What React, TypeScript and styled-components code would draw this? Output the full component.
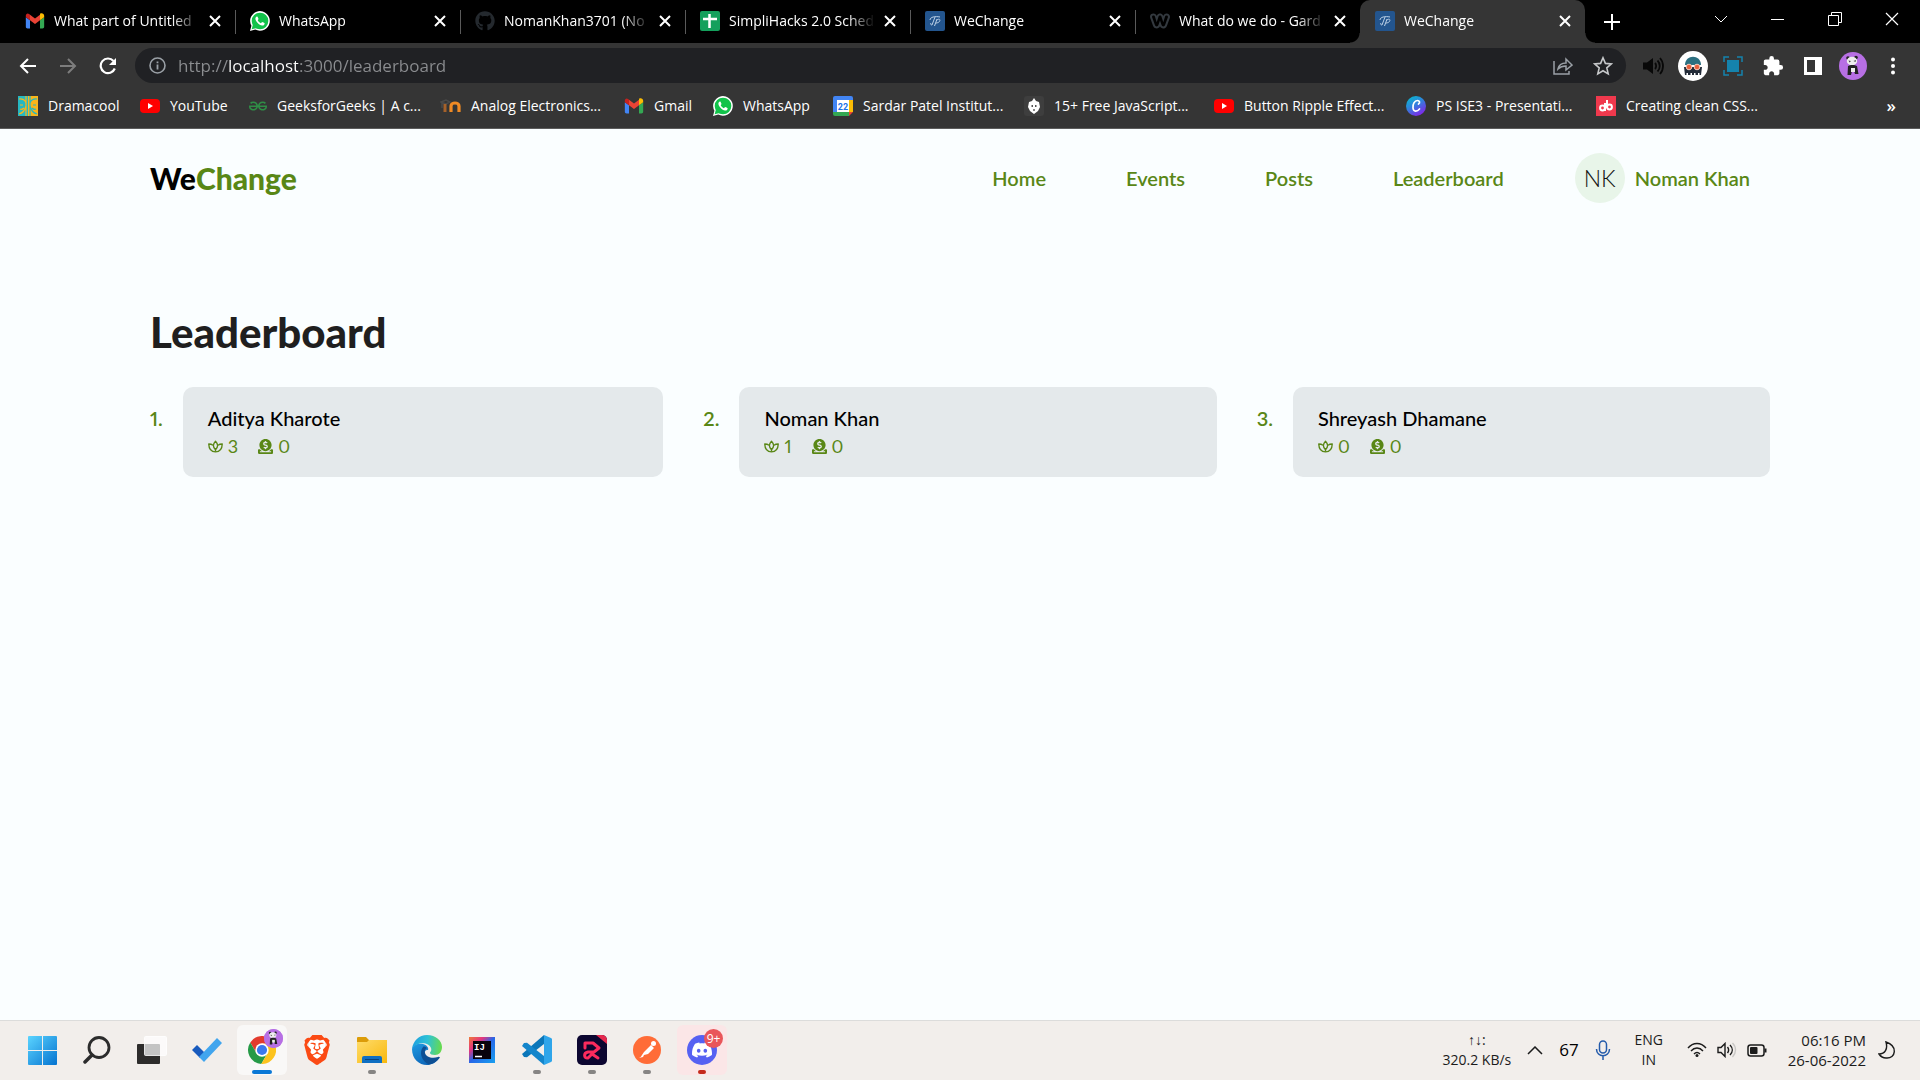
import React from "react";
import styled, { createGlobalStyle, css } from "styled-components";
import { FaDonate, FaGithub, FaWhatsapp, FaWeebly } from "react-icons/fa";
import { MdExtension } from "react-icons/md";
import { SiBrave, SiGeeksforgeeks, SiDiscord } from "react-icons/si";

const uiFont = `"Open Sans", "Noto Sans", sans-serif`;
const pageFont = `Lato, "Open Sans", sans-serif`;
const green = "#598716";

const GlobalStyle = createGlobalStyle`
  *, *::before, *::after { box-sizing: border-box; }
  body { margin: 0; background: #fafeff; font-family: ${uiFont}; }
  button, input { font: inherit; color: inherit; border: 0; padding: 0; margin: 0; background: none; }
  button { cursor: pointer; }
  a { color: inherit; text-decoration: none; }
  svg { display: block; flex: none; }
`;

const Screen = styled.div`
  display: flex;
  flex-direction: column;
  min-height: 100vh;
`;

/* ---------- Browser: tab strip ---------- */

const TabStrip = styled.div`
  display: flex;
  align-items: stretch;
  height: 43px;
  padding-left: 10px;
  background: #000;
  color: #fff;
`;

const Tab = styled.div<{ $active?: boolean; $divider?: boolean }>`
  position: relative;
  display: flex;
  align-items: center;
  gap: 5px;
  flex: 0 1 225px;
  min-width: 0;
  padding: 0 10px 2px 15px;
  background: ${(p) => (p.$active ? "#353535" : "transparent")};
  border-radius: 10px 10px 0 0;
  ${(p) =>
    p.$divider &&
    css`
      &::after {
        content: "";
        position: absolute;
        right: -1px;
        top: 10px;
        width: 1px;
        height: 24px;
        background: #5a5a5a;
      }
    `}
  ${(p) =>
    p.$active &&
    css`
      &::before,
      &::after {
        content: "";
        position: absolute;
        bottom: 0;
        width: 10px;
        height: 10px;
      }
      &::before {
        left: -10px;
        background: radial-gradient(circle at 0 0, transparent 9px, #353535 10px);
      }
      &::after {
        right: -10px;
        background: radial-gradient(circle at 100% 0, transparent 9px, #353535 10px);
      }
    `}
`;

const TabTitle = styled.button`
  display: flex;
  align-items: center;
  gap: 9px;
  flex: 1;
  min-width: 0;
  font-size: 14px;
  line-height: 24px;
  text-align: left;
`;

const TabText = styled.span`
  flex: 1;
  min-width: 0;
  overflow: hidden;
  white-space: nowrap;
  mask-image: linear-gradient(to right, #000 calc(100% - 28px), transparent);
`;

const CloseButton = styled.button`
  display: grid;
  place-items: center;
  width: 20px;
  height: 20px;
`;

const NewTab = styled.button`
  display: grid;
  place-items: center;
  width: 54px;
`;

const WindowControls = styled.div`
  display: flex;
  margin-left: auto;
`;

const WindowButton = styled.button`
  display: grid;
  place-items: center;
  width: 57px;
  height: 38px;
`;

/* ---------- Browser: toolbar ---------- */

const Toolbar = styled.div`
  display: flex;
  align-items: center;
  gap: 11px;
  height: 45px;
  padding: 0 11px 0 12px;
  background: #353535;
  color: #fff;
`;

const ToolGroup = styled.div`
  display: flex;
  gap: 8px;
`;

const ToolButton = styled.button`
  display: grid;
  place-items: center;
  width: 32px;
  height: 32px;
`;

const AddressBar = styled.label`
  display: flex;
  align-items: center;
  gap: 12px;
  flex: 1;
  min-width: 0;
  height: 35px;
  padding: 0 7px 0 14px;
  border-radius: 18px;
  background: #202124;
  color: #9aa0a6;
`;

const AddressInput = styled.input`
  flex: 1;
  min-width: 0;
  height: 30px;
  outline: 0;
  font-size: 17px;
  color: #8b8d90;
  background: linear-gradient(to right, #8b8d90 50px, #fff 50px, #fff 120px, #8b8d90 120px);
  background-clip: text;
  -webkit-background-clip: text;
  -webkit-text-fill-color: transparent;
`;

/* ---------- Browser: bookmarks ---------- */

const Bookmarks = styled.nav`
  display: flex;
  align-items: center;
  height: 41px;
  padding: 0 24px 4px 18px;
  background: #353535;
  border-bottom: 1px solid #5c5c5c;
  color: #fff;
`;

const Bookmark = styled.a<{ $w: number }>`
  display: flex;
  align-items: center;
  gap: 10px;
  flex: 0 1 ${(p) => p.$w}px;
  min-width: 0;
  font-size: 14px;
  line-height: 24px;
  white-space: nowrap;
`;

const MoreBookmarks = styled.button`
  margin-left: auto;
  font-size: 17px;
  line-height: 20px;
  font-weight: 600;
`;

/* ---------- Page ---------- */

const Site = styled.div`
  flex: 1;
  padding: 0 150px;
  background: #fafeff;
  font-family: ${pageFont};
`;

const Header = styled.header`
  display: flex;
  align-items: center;
  justify-content: space-between;
  height: 98px;
  padding-right: 20px;
`;

const Logo = styled.a`
  font-size: 30px;
  font-weight: 900;
  line-height: 40px;
  color: #000;
  span { color: ${green}; }
`;

const MainNav = styled.nav`
  display: flex;
  align-items: center;
  gap: 80px;
  color: ${green};
  font-size: 20px;
  line-height: 28px;
  font-weight: 600;
`;

const NavEnd = styled.div`
  display: flex;
  align-items: center;
  gap: 71px;
`;

const Profile = styled.a`
  display: flex;
  align-items: center;
  gap: 10px;
`;

const Avatar = styled.span`
  display: grid;
  place-items: center;
  width: 50px;
  height: 50px;
  border-radius: 50%;
  background: #e8f5e9;
  color: #111;
  font-size: 23px;
  font-weight: 300;
`;

const Main = styled.main`
  padding-top: 80px;
`;

const Heading = styled.h1`
  margin: 0 0 30px;
  font-size: 42px;
  line-height: 50px;
  font-weight: 900;
  color: #1f1f1f;
`;

const Board = styled.ol`
  display: grid;
  grid-template-columns: repeat(3, 1fr);
  gap: 40px;
  margin: 0;
  padding: 0;
  list-style: none;
  font-variant-numeric: proportional-nums;
`;

const Entry = styled.li`
  display: flex;
  gap: 20px;
`;

const Rank = styled.span`
  padding-top: 17px;
  font-size: 20px;
  line-height: 28px;
  font-weight: 600;
  color: ${green};
`;

const Card = styled.article`
  flex: 1;
  padding: 17px 25px;
  border-radius: 10px;
  background: #e4e9eb;
`;

const Name = styled.h2`
  margin: 0;
  font-size: 20px;
  line-height: 28px;
  font-weight: 500;
  color: #000;
`;

const Stats = styled.div`
  display: flex;
  gap: 20px;
`;

const Stat = styled.span`
  display: flex;
  align-items: center;
  gap: 5px;
  font-size: 18px;
  line-height: 28px;
  color: ${green};
`;

/* ---------- Taskbar ---------- */

const Taskbar = styled.footer`
  display: flex;
  align-items: center;
  height: 60px;
  padding: 0 24px 1px 17px;
  background: #f2eeeb;
  border-top: 1px solid #dcdcdb;
  color: #1b1b1b;
`;

const Apps = styled.div`
  display: flex;
  gap: 5px;
`;

const AppButton = styled.button<{ $bg?: string; $mark?: string; $wide?: boolean }>`
  position: relative;
  display: grid;
  place-items: center;
  width: 50px;
  height: 50px;
  border-radius: 6px;
  background: ${(p) => p.$bg || "transparent"};
  ${(p) =>
    p.$mark &&
    css`
      &::after {
        content: "";
        position: absolute;
        left: calc(50% - ${p.$wide ? 10 : 4}px);
        bottom: 1px;
        width: ${p.$wide ? 20 : 8}px;
        height: 4px;
        border-radius: 2px;
        background: ${p.$mark};
      }
    `}
`;

const Badge = styled.span<{ $bg: string }>`
  position: absolute;
  top: 4px;
  right: 4px;
  display: grid;
  place-items: center;
  width: 19px;
  height: 19px;
  border-radius: 50%;
  background: ${(p) => p.$bg};
  color: #fff;
  font-size: 12px;
  line-height: 18px;
`;

const Tray = styled.div`
  display: flex;
  align-items: center;
  gap: 21px;
  margin-left: auto;
`;

const TrayGroup = styled.div<{ $gap: number }>`
  display: flex;
  align-items: center;
  gap: ${(p) => p.$gap}px;
`;

const TrayText = styled.div<{ $align?: string; $w?: number; $size?: number }>`
  min-width: ${(p) => p.$w || 0}px;
  font-size: ${(p) => p.$size || 14}px;
  line-height: 20px;
  text-align: ${(p) => p.$align || "center"};
  white-space: nowrap;
`;

const Temperature = styled.span`
  font-size: 17px;
  line-height: 20px;
  font-weight: 500;
  color: #000;
`;

/* ---------- Icons ---------- */

const line = { fill: "none", stroke: "currentColor" } as const;

const CloseIcon = () => (
  <svg width="12" height="12" viewBox="0 0 12 12" {...line} strokeWidth="2"><path d="M1 1l10 10M11 1L1 11" /></svg>
);

const GmailIcon = ({ w = 20 }: { w?: number }) => (
  <svg width={w} height="20" viewBox="0 0 24 24">
    <path fill="#4285f4" d="M3 21h3V11L1 7.5V19c0 1.100.9 2 2 2z" />
    <path fill="#34a853" d="M18 21h3c1.100 0 2-.9 2-2V7.500L18 11z" />
    <path fill="#fbbc04" d="M18 5v6l5-3.500V5.800c0-2.500-2.900-3.900-4.900-2.400z" />
    <path fill="#ea4335" d="M6 11V4.500l6 4.500 6-4.500V11l-6 4.500z" />
    <path fill="#c5221f" d="M1 5.800v1.700L6 11V4.500L4.900 3.600C2.900 2 1 3.300 1 5.800z" />
  </svg>
);

const WhatsAppIcon = () => (
  <svg width="20" height="20" viewBox="0 0 24 24">
    <path fill="#fff" d="M0 24l1.700-6.200A11.800 11.800 0 1 1 6.300 22.300z" />
    <circle cx="12" cy="12" r="10" fill="#12c34a" />
    <path fill="#12c34a" d="M2 22l1.600-6 4.400 4.500z" />
    <path fill="#fff" d="M8.200 6.500c-.5 0-2 1-1.700 3.100.4 3 4.300 7.300 8 7.800 1.700.2 3-.9 3.100-2.500 0-.6-2.600-1.800-3-1.700-.5.1-1 1.500-1.500 1.400-1.400-.4-3.200-2-3.800-3.500-.1-.4.9-1 .9-1.500 0-.5-1-3-1.400-3.100z" />
  </svg>
);

const SheetIcon = () => (
  <svg width="20" height="20" viewBox="0 0 20 20"><rect width="20" height="20" rx="2" fill="#14a05c" /><path d="M9.500 3v14M3 8h14" stroke="#fff" strokeWidth="2.500" /></svg>
);

const WeChangeIcon = () => (
  <svg width="20" height="20" viewBox="0 0 20 20" fill="none" stroke="#bcd0e6" strokeWidth="1">
    <rect width="20" height="20" rx="2" fill="#23558e" stroke="none" />
    <path d="M5 9c0-3 5-4 10-3M10 6L7 14c-1 0-2-1-1-2M12 8l-2.500 7M12 9c4-3 4 3-1 3" />
  </svg>
);

const YouTubeIcon = () => (
  <svg width="20" height="20" viewBox="0 0 20 20"><rect y="3" width="20" height="14" rx="4" fill="#f00" /><path fill="#fff" d="M8 7l5 3-5 3z" /></svg>
);

const DramaIcon = () => (
  <svg width="20" height="20" viewBox="0 0 20 20" fill="none" strokeWidth="1.200">
    <rect width="10" height="20" fill="#26b8c2" /><rect x="10" width="10" height="20" fill="#f9b51a" />
    <path stroke="#f9b51a" d="M1 3c5-1 8 3 7 7s-3 7-7 8M2 9h3M2 13c2 1 3 0 4-1M8 0v20" />
    <path stroke="#26b8c2" d="M19 3c-5-1-8 3-7 7s3 7 7 8M15 9h3M14 12c1 1 2 2 4 1M12 0v20" />
  </svg>
);

const MoodleIcon = () => (
  <svg width="21" height="20" viewBox="0 0 21 20" fill="none">
    <path d="M1 6l5-2 4 2-4 2zM2 7v5" stroke="#4a4a4a" strokeWidth="1.500" />
    <path d="M5 8v8" stroke="#a5612a" strokeWidth="3" />
    <path d="M11 16v-6c0-4 8-4 8 0v6" stroke="#f08a24" strokeWidth="3.200" />
  </svg>
);

const CalendarIcon = () => (
  <svg width="20" height="20" viewBox="0 0 20 20">
    <path fill="#4285f4" d="M0 2a2 2 0 0 1 2-2h16a2 2 0 0 1 2 2v3H4v11H0z" />
    <path fill="#fbbc04" d="M16 4h4v12h-4z" /><path fill="#34a853" d="M0 16h16v4H2a2 2 0 0 1-2-2z" /><path fill="#ea4335" d="M16 16h4l-4 4z" />
    <path fill="#fff" d="M4 4h12v12H4z" />
    <text x="10" y="13.500" textAnchor="middle" fontSize="9" fontWeight="700" fontFamily="Roboto, sans-serif" fill="#1a73e8">22</text>
  </svg>
);

const DogIcon = () => (
  <svg width="20" height="20" viewBox="0 0 20 20">
    <rect width="20" height="20" rx="3" fill="#3e3e3e" />
    <path fill="#fff" d="M5 6l3-1 2-3 2 3 3 1 1 5-2 4-4 3-4-3-2-4z" />
    <path fill="#555" d="M7.500 9h1.500v2H7.500zM11 9h1.500v2H11zM9.300 13h1.400v2H9.300z" />
  </svg>
);

const CanvaIcon = () => (
  <svg width="20" height="20" viewBox="0 0 20 20" fill="none">
    <defs><linearGradient id="canva" x1="0" y1="0" x2=".6" y2="1"><stop stopColor="#00c4cc" /><stop offset=".5" stopColor="#2f83dc" /><stop offset="1" stopColor="#7d2ae8" /></linearGradient></defs>
    <circle cx="10" cy="10" r="10" fill="url(#canva)" />
    <path d="M12.500 8c2-1 1-3.500-1-3.500-3 0-5 4-4.500 7.500.4 4 4 4 6.500 1" stroke="#fff" strokeWidth="1.700" strokeLinecap="round" />
  </svg>
);

const DbIcon = () => (
  <svg width="20" height="20" viewBox="0 0 20 20" fill="none" stroke="#fff" strokeWidth="2">
    <rect width="20" height="20" fill="#f0394d" stroke="none" />
    <circle cx="6.500" cy="12" r="2.400" /><circle cx="13.500" cy="11" r="2.400" /><path d="M9 7v8M11 4v8" />
  </svg>
);

const LotusIcon = () => (
  <svg width="15" height="15" viewBox="0 0 24 24" {...line} strokeWidth="2.200" strokeLinejoin="round">
    <path d="M12 17c-4.500-4-4.500-9 0-13.500 4.500 4.500 4.500 9.500 0 13.500z" />
    <path d="M8 10C6 8.500 4 8 1.200 8c.3 8 4 12.500 10.800 12.500S22.500 16 22.800 8c-2.800 0-4.800.5-6.800 2" />
    <path d="M12 20.500V17" />
  </svg>
);

const PandaIcon = ({ size }: { size: number }) => (
  <svg width={size} height={size} viewBox="0 0 28 28">
    <circle cx="14" cy="14" r="14" fill="#b76fe4" />
    <circle cx="9" cy="6" r="1.800" fill="#222" /><circle cx="17" cy="5.500" r="1.800" fill="#222" />
    <ellipse cx="13" cy="9" rx="5.200" ry="4.300" fill="#eee" />
    <path fill="#444" d="M9.500 8.500l2.500.5-1.500 1.500zM14.500 9l2.500-1-.5 2z" />
    <path fill="#222" d="M9 14c2-1.500 7-1.500 9 0l1.500 8h-3.500l-1-3h-2l-1 4H8.500z" />
    <path fill="#eee" d="M12 16h4v4h-4z" />
  </svg>
);

const MaskIcon = () => (
  <svg width="30" height="30" viewBox="0 0 30 30">
    <circle cx="15" cy="15" r="15" fill="#fff" />
    <path fill="#2b6f80" d="M7 14c0-11 16-11 16 0z" />
    <path fill="#222b38" d="M6 16h18l-1 8h-1.500v-2H20v2h-2.500v-2H16v2h-2v-2h-1.500v2H10v-2H8.500v2H7z" />
    <circle cx="11" cy="16" r="2.800" fill="#e8603c" stroke="#f3c9bb" /><circle cx="19" cy="16" r="2.800" fill="#e8603c" stroke="#f3c9bb" />
  </svg>
);

const ChromeIcon = () => (
  <svg width="28" height="28" viewBox="2 2 44 44">
    <path fill="#e33b2e" d="M5.540 12.030A22 22 0 0 1 43.600 14H24l-8.660 15z" />
    <path fill="#269a47" d="M5.540 12.030A22 22 0 0 0 22.860 45.970L32.660 29 24 24l-8.660 5z" />
    <path fill="#fcc31e" d="M22.860 45.970A22 22 0 0 0 43.600 14H24l8.660 15z" />
    <circle cx="24" cy="24" r="10.500" fill="#fff" /><circle cx="24" cy="24" r="8" fill="#3b79ee" />
  </svg>
);

const WindowsIcon = () => (
  <svg width="29" height="29" viewBox="0 0 29 29">
    <defs><linearGradient id="win" x1="0" y1="0" x2="1" y2="1" ><stop stopColor="#5bd4ff" /><stop offset="1" stopColor="#0573d0" /></linearGradient></defs>
    <rect width="29" height="29" rx="1" fill="url(#win)" /><path d="M14.500 0v29M0 14.500h29" stroke="#f2eeeb" />
  </svg>
);

const SearchIcon = () => (
  <svg width="28" height="28" viewBox="0 0 28 28" fill="none" stroke="#2c2c2c" strokeWidth="2.800" strokeLinecap="round"><circle cx="16" cy="11.500" r="10" /><path d="M9 19l-7 7" strokeWidth="3.500" /></svg>
);

const TaskViewIcon = () => (
  <svg width="30" height="30" viewBox="0 0 30 30">
    <rect y="9" width="23" height="20" rx="1" fill="#2d2c2b" />
    <rect x="7.500" y="1.500" width="22" height="19" rx="1" fill="#fff" fillOpacity=".72" stroke="#fff" strokeOpacity=".8" />
  </svg>
);

const TodoIcon = () => (
  <svg width="30" height="26" viewBox="0 0 30 26"><path fill="#185abd" d="M0 13l5-5 8 8-5 5z" /><path fill="#41a5ee" d="M7 20L25 1l5 5-18 19z" /></svg>
);

const FolderIcon = () => (
  <svg width="30" height="28" viewBox="0 0 30 28">
    <defs><linearGradient id="folder" x1="0" y1="0" x2="1" y2="1"><stop stopColor="#ffdc6b" /><stop offset="1" stopColor="#f8b80d" /></linearGradient></defs>
    <path fill="#dc9c09" d="M0 2a1 1 0 0 1 1-1h8l3 3h17a1 1 0 0 1 1 1v4H0z" /><path fill="url(#folder)" d="M0 6h10l2-2h18v23H0z" />
    <path fill="#0f6fc2" d="M5 27v-5a2 2 0 0 1 2-2h16a2 2 0 0 1 2 2v5z" /><path stroke="#07437e" d="M8 23.500h14" />
  </svg>
);

const EdgeIcon = () => (
  <svg width="30" height="30" viewBox="0 0 30 30">
    <defs>
      <linearGradient id="edgeTop" x1="0" y1=".4" x2="1" y2=".5"><stop stopColor="#1e9fe0" /><stop offset=".5" stopColor="#2fc2d5" /><stop offset="1" stopColor="#68db4b" /></linearGradient>
      <linearGradient id="edgeLeft" x1="0" y1="0" x2=".6" y2="1"><stop stopColor="#209be2" /><stop offset="1" stopColor="#0d63b6" /></linearGradient>
    </defs>
    <path fill="url(#edgeLeft)" d="M0 14C1 9 7 8 11 9c4 1 6 4 5 6-3 0-4 2-3 5 2 4 8 6 14 3-3 5-8 7-12 7C7 30 0 24 0 14z" />
    <path fill="#0e4f94" d="M11 12c-4 5-2 14 6 17.500 4-.5 8-3 11-7-1-1-1-1-2-.5-6 2-12 0-13-4-.6-2 0-4 2-5-1-1-3-2-4-1z" />
    <path fill="url(#edgeTop)" d="M0 14C1 6 7 0 15 0c9 0 15 6 15 12 0 5-3 8-7 8-3 0-5-1-5-2s2-2 1-5C17 7 5 6 0 14z" />
  </svg>
);

const IdeaIcon = () => (
  <svg width="26" height="26" viewBox="0 0 26 26">
    <defs><linearGradient id="idea" x1="0" y1="0" x2="1" y2="1"><stop stopColor="#ee7a38" /><stop offset=".28" stopColor="#e3347f" /><stop offset=".5" stopColor="#2767e8" /><stop offset="1" stopColor="#18a0ef" /></linearGradient></defs>
    <rect width="26" height="26" fill="url(#idea)" /><rect x="4" y="4" width="18" height="18" fill="#08030c" />
    <text x="5" y="13" fontSize="9" fontWeight="700" fontFamily="'Liberation Mono', monospace" fill="#fff">IJ</text><path stroke="#fff" strokeWidth="1.500" d="M6 19.500h7" />
  </svg>
);

const CodeIcon = () => (
  <svg width="30" height="30" viewBox="0 0 30 30">
    <path fill="#0b76b9" d="M22 0L0 19l2 3 3 .2L22 9z" /><path fill="#1485cb" d="M22 30L0 11l2-3 3-.2L22 21z" />
    <path fill="#2fa5ea" d="M22 0l7 3a2 2 0 0 1 1 2v20a2 2 0 0 1-1 2l-7 3z" />
  </svg>
);

const PlayerIcon = () => (
  <svg width="30" height="30" viewBox="0 0 30 30" fill="none">
    <rect width="30" height="30" rx="5" fill="#0c0630" /><path fill="#e5294e" d="M19 0h6a5 5 0 0 1 5 5v4z" />
    <path d="M8 13V8h8l6 5-5 4-6 0c-5 1-4 7 0 6l4-4 6 4" stroke="#fb2a5d" strokeWidth="3" strokeLinejoin="round" strokeLinecap="round" />
  </svg>
);

const PostmanIcon = () => (
  <svg width="28" height="28" viewBox="0 0 28 28"><circle cx="14" cy="14" r="14" fill="#ff6c37" /><circle cx="20.500" cy="7.500" r="2.500" fill="#fff" /><path fill="#fff" d="M18 9l3 3-6 6-4 1-4 3 4-6zM6 22l5-3-1 2z" /></svg>
);

const DiscordIcon = () => (
  <svg width="30" height="30" viewBox="0 0 30 30"><circle cx="15" cy="15" r="15" fill="#5661f2" /><g transform="translate(5 5)" color="#fff"><SiDiscord size={20} /></g></svg>
);

const BraveIcon = () => (
  <svg width="30" height="30" viewBox="0 0 30 30"><path fill="#fff" d="M7 5h16v15l-8 7-8-7z" /><g color="#fb4a14"><SiBrave size={30} /></g></svg>
);

/* ---------- Data ---------- */

const tabs: { title: string; icon: React.ReactNode; active?: boolean }[] = [
  { title: "What part of Untitled", icon: <GmailIcon /> },
  { title: "WhatsApp", icon: <WhatsAppIcon /> },
  { title: "NomanKhan3701 (No", icon: <FaGithub size={20} color="#24292e" /> },
  { title: "SimpliHacks 2.0 Sched", icon: <SheetIcon /> },
  { title: "WeChange", icon: <WeChangeIcon /> },
  { title: "What do we do - Gard", icon: <FaWeebly size={20} color="#33393f" /> },
  { title: "WeChange", icon: <WeChangeIcon />, active: true },
];

const bookmarks = [
  { title: "Dramacool", w: 122, icon: <DramaIcon /> },
  { title: "YouTube", w: 109, icon: <YouTubeIcon /> },
  { title: "GeeksforGeeks | A c...", w: 191, icon: <SiGeeksforgeeks size={18} color="#2f8d46" /> },
  { title: "Analog Electronics...", w: 184, icon: <MoodleIcon /> },
  { title: "Gmail", w: 89, icon: <GmailIcon /> },
  { title: "WhatsApp", w: 120, icon: <WhatsAppIcon /> },
  { title: "Sardar Patel Institut...", w: 191, icon: <CalendarIcon /> },
  { title: "15+ Free JavaScript...", w: 190, icon: <DogIcon /> },
  { title: "Button Ripple Effect...", w: 192, icon: <YouTubeIcon /> },
  { title: "PS ISE3 - Presentati...", w: 190, icon: <CanvaIcon /> },
  { title: "Creating clean CSS...", w: 190, icon: <DbIcon /> },
];

const people = [
  { name: "Aditya Kharote", plants: 3, donations: 0 },
  { name: "Noman Khan", plants: 1, donations: 0 },
  { name: "Shreyash Dhamane", plants: 0, donations: 0 },
];

const apps: { name: string; icon: React.ReactNode; mark?: string; wide?: boolean; bg?: string; badge?: React.ReactNode }[] = [
  { name: "Start", icon: <WindowsIcon /> },
  { name: "Search", icon: <SearchIcon /> },
  { name: "Task view", icon: <TaskViewIcon /> },
  { name: "To Do", icon: <TodoIcon /> },
  { name: "Chrome", icon: <ChromeIcon />, mark: "#0a78d6", wide: true, bg: "#f9f8f7", badge: <Badge $bg="#b76fe4"><PandaIcon size={19} /></Badge> },
  { name: "Brave", icon: <BraveIcon /> },
  { name: "File Explorer", icon: <FolderIcon />, mark: "#868483" },
  { name: "Edge", icon: <EdgeIcon /> },
  { name: "IntelliJ IDEA", icon: <IdeaIcon /> },
  { name: "Visual Studio Code", icon: <CodeIcon />, mark: "#868483" },
  { name: "Media player", icon: <PlayerIcon />, mark: "#868483" },
  { name: "Postman", icon: <PostmanIcon />, mark: "#868483" },
  { name: "Discord", icon: <DiscordIcon />, mark: "#c42b1c", bg: "#fbe6e7", badge: <Badge $bg="#e9565a">9+</Badge> },
];

export default function App() {
  return (
    <Screen>
      <GlobalStyle />
      <TabStrip>
        {tabs.map((t, i) => (
          <Tab key={i} $active={t.active} $divider={i < tabs.length - 2}>
            <TabTitle>{t.icon}<TabText>{t.title}</TabText></TabTitle>
            <CloseButton aria-label="Close tab"><CloseIcon /></CloseButton>
          </Tab>
        ))}
        <NewTab aria-label="New tab">
          <svg width="16" height="16" viewBox="0 0 16 16" {...line} strokeWidth="2"><path d="M8 0v16M0 8h16" /></svg>
        </NewTab>
        <WindowControls>
          <WindowButton aria-label="Search tabs"><svg width="14" height="8" viewBox="0 0 14 8" {...line}><path d="M1 1l6 6 6-6" /></svg></WindowButton>
          <WindowButton aria-label="Minimize"><svg width="13" height="13" viewBox="0 0 13 13" {...line}><path d="M0 6.500h13" /></svg></WindowButton>
          <WindowButton aria-label="Restore"><svg width="14" height="14" viewBox="0 0 14 14" {...line}><path d="M.5 3.500h10v10H.5zM3.500 3.500v-3h10v10h-3" /></svg></WindowButton>
          <WindowButton aria-label="Close"><svg width="14" height="14" viewBox="0 0 14 14" {...line} strokeWidth="1.200"><path d="M1 1l12 12M13 1L1 13" /></svg></WindowButton>
        </WindowControls>
      </TabStrip>

      <Toolbar>
        <ToolGroup>
          <ToolButton aria-label="Back"><svg width="18" height="18" viewBox="0 0 18 18" {...line} strokeWidth="2"><path d="M17 9H2M9 2L2 9l7 7" /></svg></ToolButton>
          <ToolButton aria-label="Forward"><svg width="18" height="18" viewBox="0 0 18 18" fill="none" stroke="#7d7d7d" strokeWidth="2"><path d="M1 9h15M9 2l7 7-7 7" /></svg></ToolButton>
          <ToolButton aria-label="Reload"><svg width="18" height="18" viewBox="0 0 18 18" {...line} strokeWidth="2.200"><path d="M15.800 11.500A7.300 7.300 0 1 1 14.500 4" /><path d="M17 1v7h-7z" fill="currentColor" stroke="none" /></svg></ToolButton>
        </ToolGroup>
        <AddressBar>
          <svg width="17" height="17" viewBox="0 0 17 17" {...line} strokeWidth="1.600"><circle cx="8.500" cy="8.500" r="7.500" /><path d="M8.500 7.500v5M8.500 4.500v1.700" strokeWidth="1.800" /></svg>
          <AddressInput aria-label="Address" defaultValue="http://localhost:3000/leaderboard" />
          <ToolGroup>
            <ToolButton aria-label="Share"><svg width="20" height="20" viewBox="0 0 20 20" {...line} strokeWidth="1.500"><path d="M1 5v13h15v-3M5 13c1-5 4-6 8-6V3l6 6-6 5v-4c-4 0-6 1-8 3z" /></svg></ToolButton>
            <ToolButton aria-label="Bookmark this page"><svg width="20" height="20" viewBox="0 0 20 20" fill="none" stroke="#c6c8ca" strokeWidth="1.600"><path d="M10 1.800l2.400 5.600 6 .5-4.600 4 1.400 6L10 14.700 4.800 17.900l1.400-6-4.600-4 6-.5z" /></svg></ToolButton>
          </ToolGroup>
        </AddressBar>
        <ToolGroup>
          <ToolButton aria-label="Volume"><svg width="21" height="20" viewBox="0 0 21 20" fill="none" stroke="#080808" strokeWidth="1.800"><path fill="#080808" stroke="none" d="M0 6.500h4L10 2v16l-6-4.500H0z" /><path d="M12 7c1.500 1.500 1.500 4.500 0 6M14.500 4.500c3 3 3 8 0 11M17 2c4 4.500 4 11.500 0 16" /></svg></ToolButton>
          <ToolButton aria-label="Privacy"><MaskIcon /></ToolButton>
          <ToolButton aria-label="Capture"><svg width="20" height="20" viewBox="0 0 20 20" fill="none" stroke="#1583ad" strokeWidth="1.500"><path d="M1 6V1h5M14 1h5v5M19 14v5h-5M6 19H1v-5" /><rect x="4" y="4" width="12" height="12" fill="#1583ad" stroke="none" /></svg></ToolButton>
          <ToolButton aria-label="Extensions"><MdExtension size={22} /></ToolButton>
          <ToolButton aria-label="Side panel"><svg width="18" height="18" viewBox="0 0 18 18"><path fill="#fff" fillRule="evenodd" d="M0 0h18v18H0zM3 3v12h8V3z" /></svg></ToolButton>
          <ToolButton aria-label="Profile"><PandaIcon size={28} /></ToolButton>
          <ToolButton aria-label="Menu"><svg width="6" height="18" viewBox="0 0 6 18" fill="#fff"><circle cx="3" cy="2.500" r="2" /><circle cx="3" cy="9" r="2" /><circle cx="3" cy="15.500" r="2" /></svg></ToolButton>
        </ToolGroup>
      </Toolbar>

      <Bookmarks>
        {bookmarks.map((b) => (
          <Bookmark key={b.title} href="#" $w={b.w}>{b.icon}<span>{b.title}</span></Bookmark>
        ))}
        <MoreBookmarks>»</MoreBookmarks>
      </Bookmarks>

      <Site>
        <Header>
          <Logo href="#">We<span>Change</span></Logo>
          <MainNav>
            <a href="#">Home</a>
            <a href="#">Events</a>
            <a href="#">Posts</a>
            <NavEnd>
              <a href="#">Leaderboard</a>
              <Profile href="#"><Avatar>NK</Avatar>Noman Khan</Profile>
            </NavEnd>
          </MainNav>
        </Header>
        <Main>
          <Heading>Leaderboard</Heading>
          <Board>
            {people.map((p, i) => (
              <Entry key={p.name}>
                <Rank>{i + 1}.</Rank>
                <Card>
                  <Name>{p.name}</Name>
                  <Stats>
                    <Stat><LotusIcon />{p.plants}</Stat>
                    <Stat><FaDonate size={15} />{p.donations}</Stat>
                  </Stats>
                </Card>
              </Entry>
            ))}
          </Board>
        </Main>
      </Site>

      <Taskbar>
        <Apps>
          {apps.map((a) => (
            <AppButton key={a.name} aria-label={a.name} $bg={a.bg} $mark={a.mark} $wide={a.wide}>{a.icon}{a.badge}</AppButton>
          ))}
        </Apps>
        <Tray>
          <TrayGroup $gap={16}>
            <TrayText>↑↓:<br />320.2 KB/s</TrayText>
            <svg width="16" height="9" viewBox="0 0 16 9" {...line} strokeWidth="1.500"><path d="M1 8l7-7 7 7" /></svg>
            <Temperature>67</Temperature>
            <svg width="16" height="20" viewBox="0 0 16 20" fill="none" stroke="#245bab" strokeWidth="1.500"><rect x="4.500" y="1" width="7" height="12" rx="3.500" /><path d="M1.500 9c0 9 13 9 13 0M8 16v4" /></svg>
          </TrayGroup>
          <TrayText $w={34}>ENG<br />IN</TrayText>
          <TrayGroup $gap={10}>
            <svg width="20" height="16" viewBox="0 0 20 16" {...line} strokeWidth="1.400"><path d="M1 6c5-6 13-6 18 0M4 9c3.500-4 8.500-4 12 0M7 12c2-2 4-2 6 0" /><circle cx="10" cy="13.500" r="1.500" fill="currentColor" stroke="none" /></svg>
            <svg width="20" height="16" viewBox="0 0 20 16" {...line} strokeWidth="1.400"><path d="M1 5.500h3l4-4v13l-4-4H1zM10.500 5c1.500 2 1.500 4 0 6M13 3c3 3 3 7 0 10" /><path d="M15.500 1c4 4 4 10 0 14" stroke="#c9c7c5" /></svg>
            <svg width="20" height="13" viewBox="0 0 20 13" {...line} strokeWidth="1.500"><rect x="1" y="1" width="16" height="11" rx="2.500" /><rect x="3" y="3" width="7.500" height="7" rx="1" fill="currentColor" stroke="none" /><path d="M18.500 4.500v4" strokeWidth="2" /></svg>
          </TrayGroup>
          <TrayGroup $gap={12}>
            <TrayText $align="right" $size={15}>06:16 PM<br />26-06-2022</TrayText>
            <svg width="18" height="18" viewBox="0 0 18 18" {...line} strokeWidth="1.400"><path d="M8 1c12 4 10 17 0 16-3 0-5-1-7-4 6 0 9-5 7-12z" /></svg>
          </TrayGroup>
        </Tray>
      </Taskbar>
    </Screen>
  );
}
